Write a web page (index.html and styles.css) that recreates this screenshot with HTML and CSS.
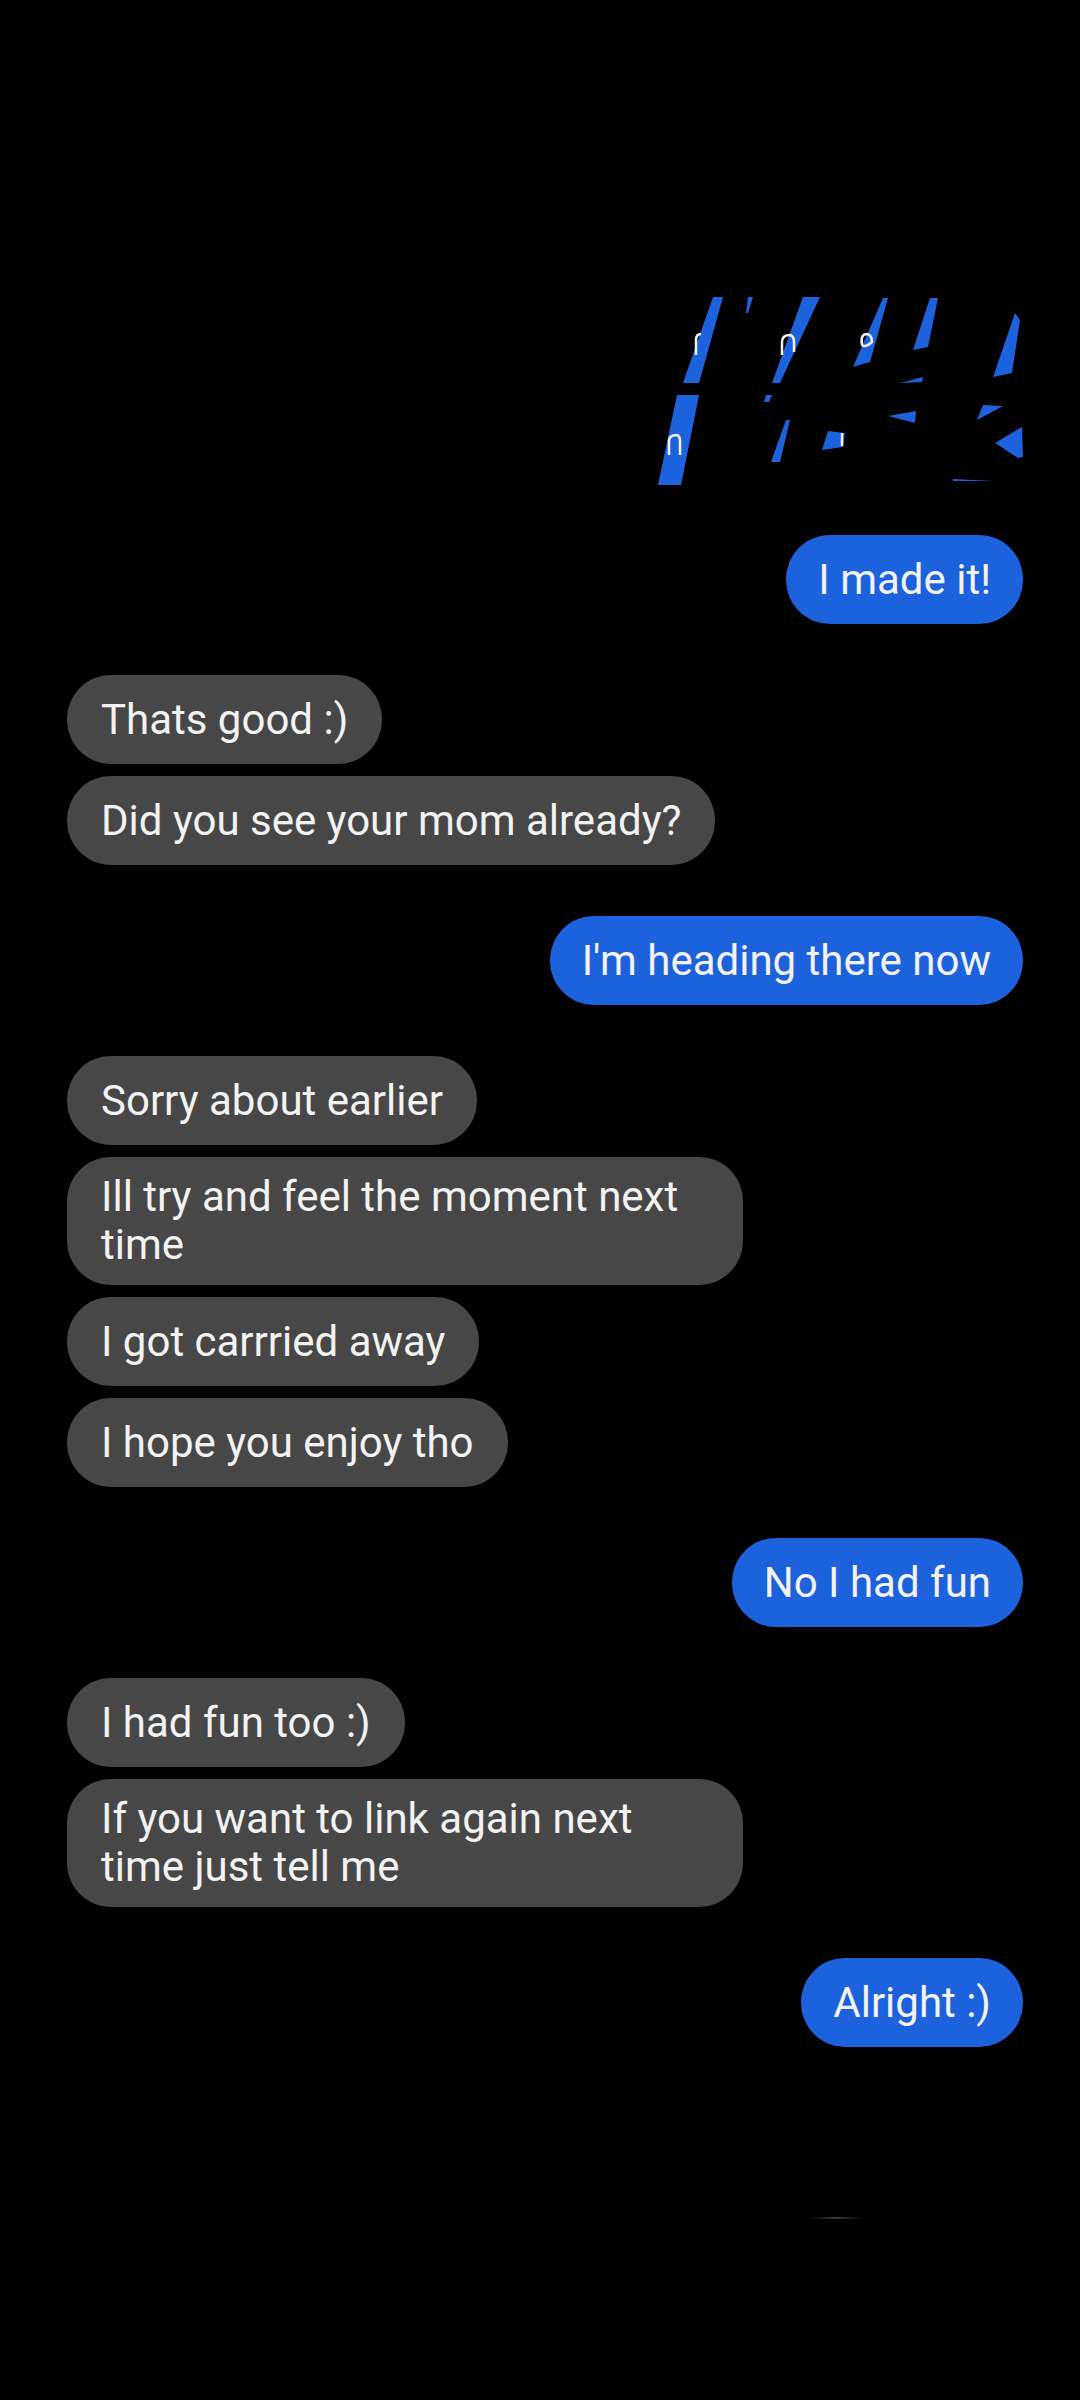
FILE: index.html
```html
<!DOCTYPE html>
<html lang="en">
<head>
  <meta charset="UTF-8" />
  <meta name="viewport" content="width=device-width, initial-scale=1.0"/>
  <title>Messages</title>
  <link rel="stylesheet" href="styles.css">
</head>
<body>
  <div class="thread">
    <!-- scribbled-over message -->
    <svg class="scribble" viewBox="643 292 380 195" width="380" height="195">
      <g fill="#1d62dd">
        <polygon points="713,297 723,297 699,383 683,383"/>
        <polygon points="677,395 699,395 681,485 658,485"/>
        <polygon points="748,297 753,297 748,313 746,313"/>
        <polygon points="803,297 820,297 780,383 772,383"/>
        <polygon points="766,395 772,395 769,402 764,402"/>
        <polygon points="786,420 790,420 780,462 771,462"/>
        <polygon points="822,450 828,431 845,433 843,447"/>
        <polygon points="883,298 888,298 870,362 853,367"/>
        <polygon points="930,298 938,298 928,347 913,350"/>
        <polygon points="1015,313 1020,320 1012,373 993,377"/>
        <polygon points="900,383 923,377 922,382"/>
        <polygon points="888,416 916,411 915,423"/>
        <polygon points="977,420 983,405 1003,406"/>
        <polygon points="995,443 1022,427 1023,457 1018,458"/>
        <polygon points="953,479 993,481 953,481"/>
      </g>
      <g fill="none" stroke="#f2f2f2" stroke-width="2.5">
        <path d="M696 355 V340 Q696 334 701 334"/>
        <path d="M669 455 V441 Q669 435 677 435 Q680 436 680 441 V455"/>
        <path d="M782 355 V342 Q782 335 790 335 Q794 336 794 342 V352"/>
        <path d="M862 345 Q860 334 867 334 Q872 335 872 342 Q865 348 862 345"/>
        <path d="M842 433 V446"/>
      </g>
    </svg>

    <div class="group out">
      <div class="bubble">I made it!</div>
    </div>

    <div class="group in">
      <div class="bubble">Thats good :)</div>
      <div class="bubble">Did you see your mom already?</div>
    </div>

    <div class="group out">
      <div class="bubble">I'm heading there now</div>
    </div>

    <div class="group in">
      <div class="bubble">Sorry about earlier</div>
      <div class="bubble">Ill try and feel the moment next time</div>
      <div class="bubble">I got carrried away</div>
      <div class="bubble">I hope you enjoy tho</div>
    </div>

    <div class="group out">
      <div class="bubble">No I had fun</div>
    </div>

    <div class="group in">
      <div class="bubble">I had fun too :)</div>
      <div class="bubble">If you want to link again next time just tell me</div>
    </div>

    <div class="group out">
      <div class="bubble">Alright :)</div>
    </div>
  </div>
  <div class="home-line"></div>
</body>
</html>
```

FILE: styles.css
```css
html, body { background: #000; }
body {
  margin: 0;
  font-family: Roboto, "Noto Sans", sans-serif;
  color: #f2f2f2;
}
.thread {
  display: flex; flex-direction: column;
  gap: 51px;
  padding: 292px 57px 0 67px;
}
.scribble { display: block; align-self: flex-end; margin-bottom: -3px; }

.group { display: flex; flex-direction: column; gap: 12px; }
.group.in { align-items: flex-start; }
.group.out { align-items: flex-end; }

.bubble {
  box-sizing: border-box;
  min-height: 89px;
  max-width: 676px;
  display: flex; align-items: center;
  font-size: 42px; line-height: 48px;
  padding: 16px 34px;
  border-radius: 44px;
  background: #474747;
}
.out .bubble { background: #1d62dd; padding: 16px 32px; }

.home-line {
  width: 53px; height: 2px;
  margin: 170px 0 0 810px;
  background: linear-gradient(90deg, transparent, #3a3a3a, transparent);
}
```
